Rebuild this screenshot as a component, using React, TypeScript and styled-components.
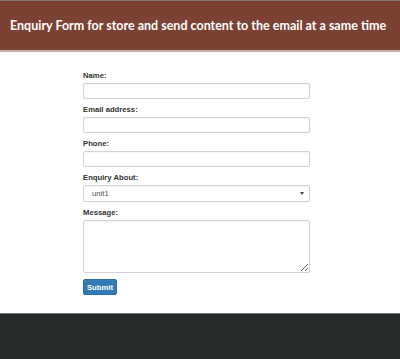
import React from "react";
import styled, { createGlobalStyle } from "styled-components";

const Global = createGlobalStyle`
  html, body { margin: 0; padding: 0; background: #fff; }
  body { font-family: "Liberation Sans", Arial, sans-serif; }
`;

const Page = styled.div`
  display: flex;
  flex-direction: column;
  height: 359px;
  overflow: hidden;
`;

const Header = styled.header`
  background: #7b4133;
  border-top: 1px solid #8a7a72;
  border-bottom: 2px solid #c9b0a8;
  height: 49px;
  flex-shrink: 0;
  display: flex;
  align-items: center;
  padding-left: 10px;
`;

const Title = styled.h1`
  margin: 0;
  color: #fff;
  font-family: Lato, sans-serif;
  font-weight: 700;
  font-size: 12.5px;
  white-space: nowrap;
`;

const Main = styled.main`
  flex: 1;
  display: flex;
  justify-content: center;
  padding: 19px 0 18px;
`;

const Form = styled.form`
  width: 227px;
  display: flex;
  flex-direction: column;
  margin-left: -7px;
`;

const Group = styled.div`
  display: flex;
  flex-direction: column;
  margin-bottom: 6px;
`;

const Label = styled.label`
  font-size: 7.7px;
  font-weight: 700;
  color: #333;
  margin-bottom: 3px;
  line-height: 9px;
`;

const fieldBase = `
  box-sizing: border-box;
  width: 100%;
  border: 1px solid #d2d2d2;
  border-radius: 2px;
  box-shadow: inset 0 1px 1px rgba(0,0,0,0.04);
  background: #fff;
  font-family: "Liberation Sans", Arial, sans-serif;
  font-size: 7.7px;
  color: #555;
  padding: 0 6px;
  margin: 0;
  outline: none;
`;

const Input = styled.input`
  ${fieldBase}
  height: 16px;
`;

const SelectBox = styled.div`
  ${fieldBase}
  height: 17px;
  display: flex;
  align-items: center;
  justify-content: space-between;
  padding: 0 5px 0 8px;
`;

const Caret = styled.span`
  width: 0;
  height: 0;
  border-left: 2px solid transparent;
  border-right: 2px solid transparent;
  border-top: 3px solid #444;
`;

const TextArea = styled.textarea`
  ${fieldBase}
  height: 53px;
  resize: vertical;
  display: block;
`;

const Button = styled.button`
  align-self: flex-start;
  width: 34px;
  height: 16px;
  background: #337ab7;
  border: 1px solid #2e6da4;
  border-radius: 2px;
  color: #fff;
  font-family: "Liberation Sans", Arial, sans-serif;
  font-size: 7.7px;
  font-weight: 700;
  padding: 0;
`;

const Footer = styled.footer`
  background: #262b2b;
  border-top: 1px solid #6d7272;
  height: 46px;
  flex-shrink: 0;
`;

export default function App() {
  return (
    <>
      <Global />
      <Page>
        <Header>
          <Title>Enquiry Form for store and send content to the email at a same time</Title>
        </Header>
        <Main>
          <Form onSubmit={(e) => e.preventDefault()}>
            <Group>
              <Label>Name:</Label>
              <Input type="text" />
            </Group>
            <Group>
              <Label>Email address:</Label>
              <Input type="email" />
            </Group>
            <Group>
              <Label>Phone:</Label>
              <Input type="text" />
            </Group>
            <Group>
              <Label>Enquiry About:</Label>
              <SelectBox>
                <span>unit1</span>
                <Caret />
              </SelectBox>
            </Group>
            <Group>
              <Label>Message:</Label>
              <TextArea />
            </Group>
            <Button type="submit">Submit</Button>
          </Form>
        </Main>
        <Footer />
      </Page>
    </>
  );
}
